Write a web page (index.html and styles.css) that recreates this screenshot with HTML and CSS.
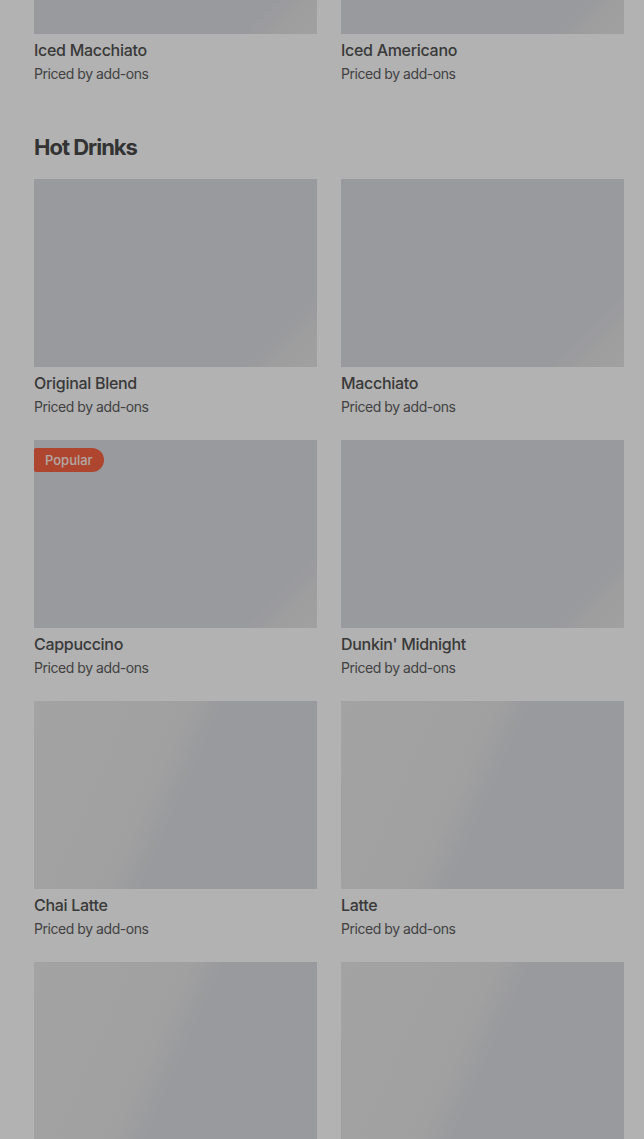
FILE: index.html
```html
<!DOCTYPE html>
<html lang="en">
<head>
    <meta charset="UTF-8">
    <title>Menu | Drinks</title>
    <link rel="stylesheet" href="styles.css">
</head>
<body>
<div class="page">
    <section class="category">
        <div class="grid first-row">
            <div class="card">
                <div class="thumb phase-a"></div>
                <p class="name">Iced Macchiato</p>
                <p class="price">Priced by add-ons</p>
            </div>
            <div class="card">
                <div class="thumb phase-a"></div>
                <p class="name">Iced Americano</p>
                <p class="price">Priced by add-ons</p>
            </div>
        </div>
    </section>

    <section class="category">
        <h2 class="cat-title">Hot Drinks</h2>
        <div class="grid">
            <div class="card">
                <div class="thumb phase-a"></div>
                <p class="name">Original Blend</p>
                <p class="price">Priced by add-ons</p>
            </div>
            <div class="card">
                <div class="thumb phase-a"></div>
                <p class="name">Macchiato</p>
                <p class="price">Priced by add-ons</p>
            </div>
            <div class="card">
                <div class="thumb phase-a">
                    <span class="badge">Popular</span>
                </div>
                <p class="name">Cappuccino</p>
                <p class="price">Priced by add-ons</p>
            </div>
            <div class="card">
                <div class="thumb phase-a"></div>
                <p class="name">Dunkin' Midnight</p>
                <p class="price">Priced by add-ons</p>
            </div>
            <div class="card">
                <div class="thumb phase-b"></div>
                <p class="name">Chai Latte</p>
                <p class="price">Priced by add-ons</p>
            </div>
            <div class="card">
                <div class="thumb phase-b"></div>
                <p class="name">Latte</p>
                <p class="price">Priced by add-ons</p>
            </div>
            <div class="card">
                <div class="thumb phase-b"></div>
                <p class="name">Americano</p>
                <p class="price">Priced by add-ons</p>
            </div>
            <div class="card">
                <div class="thumb phase-b"></div>
                <p class="name">Hot Chocolate</p>
                <p class="price">Priced by add-ons</p>
            </div>
        </div>
    </section>
</div>

<div class="backdrop"></div>
</body>
</html>
```

FILE: styles.css
```css
body {
    margin: 0;
    background: #ffffff;
    font-family: Inter, "Noto Sans", sans-serif;
    color: #2b2b2b;
    overflow: hidden;
}

.page {
    padding: 0 20px 0 34px;
}

.grid {
    display: grid;
    grid-template-columns: 1fr 1fr;
    column-gap: 24px;
    row-gap: 23px;
}

.first-row {
    margin-top: -154px;
}

.cat-title {
    margin: 49px 0 18px 0;
    font-size: 22px;
    line-height: 28px;
    font-weight: 700;
    letter-spacing: -1px;
    color: #4a4a4a;
}

.card p {
    margin: 0;
}

.thumb {
    position: relative;
    height: 188px;
    background: #dcdde2;
}

.phase-a {
    background: linear-gradient(135deg, #dcdde2 84%, #e3e3e4 92%, #e6e6e6 100%);
}

.phase-b {
    background: linear-gradient(114deg, #eaeaea 0%, #e6e6e6 42%, #dcdde2 52%, #dcdde2 100%);
}

.badge {
    position: absolute;
    top: 8px;
    left: 0;
    height: 24px;
    line-height: 24px;
    padding: 0 11px;
    border-radius: 2px 12px 12px 2px;
    background: #fa6342;
    color: #fff0ec;
    font-size: 13px;
    font-weight: 500;
}

.name {
    margin-top: 6px !important;
    font-size: 16px;
    line-height: 20px;
    font-weight: 500;
    letter-spacing: -0.3px;
    color: #525252;
}

.price {
    margin-top: 4px !important;
    font-size: 14px;
    line-height: 20px;
    letter-spacing: -0.45px;
    color: #5e5e5e;
}

.backdrop {
    position: fixed;
    top: 0;
    left: 0;
    right: 0;
    bottom: 0;
    background: rgba(0, 0, 0, 0.3);
}
```
